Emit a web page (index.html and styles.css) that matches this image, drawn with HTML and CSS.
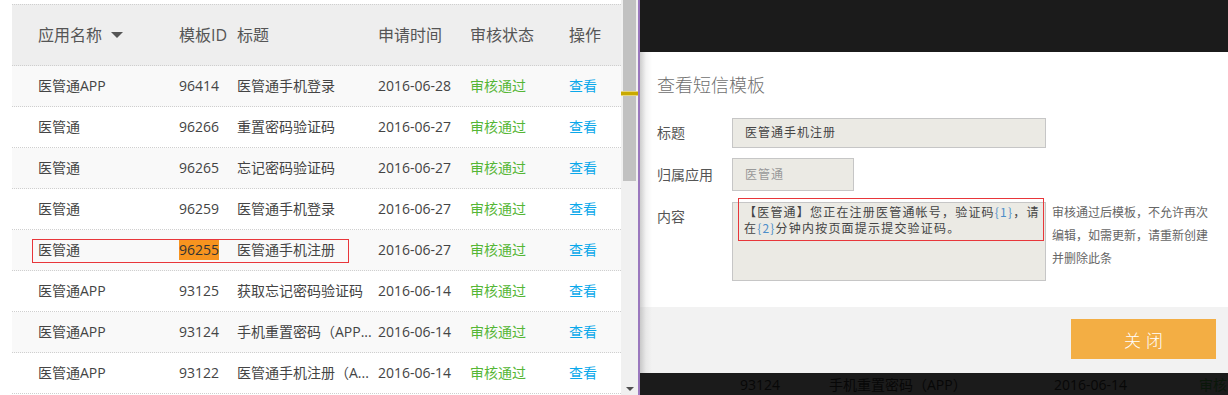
FILE: index.html
```html
<!DOCTYPE html>
<html lang="zh-CN">
<head>
<meta charset="utf-8">
<title>短信模板</title>
<link rel="stylesheet" href="styles.css">
</head>
<body>
<div class="page">
  <div class="left">
    <div class="table">
      <div class="thead">
        <div class="cell">应用名称<span class="caret"></span></div>
        <div class="cell">模板ID</div>
        <div class="cell">标题</div>
        <div class="cell">申请时间</div>
        <div class="cell">审核状态</div>
        <div class="cell">操作</div>
      </div>
      <div class="row odd">
        <div class="cell">医管通APP</div><div class="cell">96414</div><div class="cell">医管通手机登录</div><div class="cell">2016-06-28</div><div class="cell ok">审核通过</div><div class="cell"><a class="link">查看</a></div>
      </div>
      <div class="row">
        <div class="cell">医管通</div><div class="cell">96266</div><div class="cell">重置密码验证码</div><div class="cell">2016-06-27</div><div class="cell ok">审核通过</div><div class="cell"><a class="link">查看</a></div>
      </div>
      <div class="row odd">
        <div class="cell">医管通</div><div class="cell">96265</div><div class="cell">忘记密码验证码</div><div class="cell">2016-06-27</div><div class="cell ok">审核通过</div><div class="cell"><a class="link">查看</a></div>
      </div>
      <div class="row">
        <div class="cell">医管通</div><div class="cell">96259</div><div class="cell">医管通手机登录</div><div class="cell">2016-06-27</div><div class="cell ok">审核通过</div><div class="cell"><a class="link">查看</a></div>
      </div>
      <div class="row odd">
        <div class="cell">医管通</div><div class="cell"><span class="hl">96255</span></div><div class="cell">医管通手机注册</div><div class="cell">2016-06-27</div><div class="cell ok">审核通过</div><div class="cell"><a class="link">查看</a></div>
        <div class="redbox redbox-row"></div>
      </div>
      <div class="row">
        <div class="cell">医管通APP</div><div class="cell">93125</div><div class="cell">获取忘记密码验证码</div><div class="cell">2016-06-14</div><div class="cell ok">审核通过</div><div class="cell"><a class="link">查看</a></div>
      </div>
      <div class="row odd">
        <div class="cell">医管通APP</div><div class="cell">93124</div><div class="cell">手机重置密码（APP...</div><div class="cell">2016-06-14</div><div class="cell ok">审核通过</div><div class="cell"><a class="link">查看</a></div>
      </div>
      <div class="row">
        <div class="cell">医管通APP</div><div class="cell">93122</div><div class="cell">医管通手机注册（A...</div><div class="cell">2016-06-14</div><div class="cell ok">审核通过</div><div class="cell"><a class="link">查看</a></div>
      </div>
    </div>
    <div class="scrollbar">
      <div class="thumb"></div>
      <div class="mark"></div>
      <div class="arrow"></div>
    </div>
  </div>
  <div class="divider"></div>
  <div class="right">
    <div class="dark-top"></div>
    <div class="modal">
      <div class="modal-body">
        <h2 class="modal-title">查看短信模板</h2>
        <div class="form-row">
          <div class="label">标题</div>
          <div class="field field-wide">医管通手机注册</div>
        </div>
        <div class="form-row">
          <div class="label">归属应用</div>
          <div class="field field-short">医管通</div>
        </div>
        <div class="form-row form-row-top">
          <div class="label">内容</div>
          <div class="area-wrap">
            <div class="field field-area">
              <div class="area-line">【医管通】您正在注册医管通帐号，验证码<span class="var">{1}</span>，请</div>
              <div class="area-line">在<span class="var">{2}</span>分钟内按页面提示提交验证码。</div>
            </div>
            <div class="redbox redbox-area"></div>
          </div>
          <div class="hint">审核通过后模板，不允许再次编辑，如需更新，请重新创建并删除此条</div>
        </div>
      </div>
      <div class="modal-footer">
        <button class="btn-close">关闭</button>
      </div>
    </div>
    <div class="dark-bottom">
      <span class="db-id">93124</span>
      <span class="db-title">手机重置密码（APP）</span>
      <span class="db-date">2016-06-14</span>
      <span class="db-status">审核</span>
    </div>
  </div>
</div>
</body>
</html>
```

FILE: styles.css
```css
html, body {
  margin: 0;
  padding: 0;
}
body {
  width: 1228px;
  height: 395px;
  overflow: hidden;
  background: #fff;
  font-family: "Open Sans", "Noto Sans CJK SC", sans-serif;
}
.page {
  display: flex;
  height: 395px;
}

/* ---------- left table ---------- */
.left {
  display: flex;
  width: 638px;
  flex: none;
  padding-left: 12px;
  box-sizing: border-box;
  height: 395px;
  overflow: hidden;
}
.table {
  width: 609px;
  padding-top: 4px;
}
.thead,
.row {
  display: grid;
  grid-template-columns: 141px 58px 141px 92px 99px 1fr;
  padding-left: 26px;
  align-items: center;
}
.thead {
  height: 60px;
  background: #eeeeee;
  border-top: 1px dotted #cfcfcf;
  border-bottom: 1px dotted #cfcfcf;
  font-size: 16px;
  color: #555;
}
.row {
  position: relative;
  height: 40px;
  border-bottom: 1px dotted #cfcfcf;
  font-size: 14px;
  color: #444;
  background: #fff;
}
.row.odd {
  background: #f9f9f9;
}
.cell {
  white-space: nowrap;
  overflow: hidden;
  line-height: 20px;
}
.caret {
  display: inline-block;
  width: 0;
  height: 0;
  margin-left: 9px;
  border-left: 6px solid transparent;
  border-right: 6px solid transparent;
  border-top: 6px solid #555;
  vertical-align: 3px;
}
.ok {
  color: #55b635;
}
.link {
  color: #0aa8ea;
  text-decoration: none;
}
.hl {
  background: #f7941f;
  color: #333;
  padding: 1px 0;
}
.redbox {
  position: absolute;
  border: 1px solid #e8363a;
  box-sizing: border-box;
  pointer-events: none;
}
.redbox-row {
  left: 20px;
  top: 9px;
  width: 317px;
  height: 24px;
}

/* ---------- scrollbar ---------- */
.scrollbar {
  position: relative;
  width: 17px;
  flex: none;
  background: #f0f0f0;
  height: 395px;
}
.thumb {
  margin-left: 2px;
  width: 13px;
  height: 181px;
  background: #c1c1c1;
}
.mark {
  position: absolute;
  left: 0;
  top: 92px;
  width: 17px;
  height: 3px;
  background: #c9a900;
  box-shadow: 0 -1px 0 #e6d47a, 0 1px 0 #e6d47a;
}
.arrow {
  position: absolute;
  left: 5px;
  bottom: 4px;
  width: 0;
  height: 0;
  border-left: 4px solid transparent;
  border-right: 4px solid transparent;
  border-top: 4px solid #505050;
}
.divider {
  width: 2px;
  flex: none;
  background: #9a78bd;
}

/* ---------- right / modal ---------- */
.right {
  flex: 1;
  display: flex;
  flex-direction: column;
  background: #1b1b1b;
}
.dark-top {
  height: 52px;
  flex: none;
}
.modal {
  flex: none;
}
.modal-body {
  height: 255px;
  box-sizing: border-box;
  padding: 21px 0 0 17px;
  background: linear-gradient(to right, #cdcdcd 0, #f3f3f3 6px, #fff 12px);
}
.modal-title {
  margin: 0 0 21px;
  font-size: 18px;
  line-height: 24px;
  font-weight: 300;
  color: #6f6f6f;
}
.form-row {
  display: flex;
  align-items: center;
  margin-bottom: 10px;
}
.form-row-top {
  align-items: flex-start;
  margin-top: 11px;
}
.label {
  width: 75px;
  flex: none;
  font-size: 14px;
  line-height: 30px;
  color: #555;
}
.field {
  background: #ebeae4;
  border: 1px solid #c6c6c6;
  box-sizing: border-box;
  font-size: 12px;
  letter-spacing: 1px;
  color: #444;
}
.field-wide {
  width: 314px;
  height: 30px;
  line-height: 28px;
  padding-left: 12px;
}
.field-short {
  width: 122px;
  height: 33px;
  line-height: 31px;
  padding-left: 12px;
  color: #999;
}
.area-wrap {
  position: relative;
  flex: none;
}
.field-area {
  width: 314px;
  height: 79px;
  padding: 1px 4px 0 11px;
  letter-spacing: 1.2px;
  font-family: "Noto Sans CJK SC", sans-serif;
}
.area-line {
  height: 16px;
  line-height: 16px;
  white-space: nowrap;
}
.var {
  color: #4d8ec9;
}
.redbox-area {
  left: 6px;
  top: -4px;
  width: 306px;
  height: 43px;
}
.hint {
  width: 160px;
  margin-left: 6px;
  font-size: 12px;
  line-height: 23px;
  color: #666;
  margin-top: -1px;
}
.modal-footer {
  height: 66px;
  box-sizing: border-box;
  display: flex;
  justify-content: flex-end;
  align-items: flex-start;
  padding: 12px 12px 0 0;
  background: linear-gradient(to right, #c8c8c8 0, #e8e8e8 6px, #f2f2f2 12px);
}
.btn-close {
  width: 145px;
  height: 40px;
  border: 0;
  background: #f3ae44;
  color: #fff;
  font-family: "Noto Sans CJK SC", sans-serif;
  font-size: 17px;
  font-weight: 300;
  letter-spacing: 5px;
  padding: 0 0 0 5px;
}
.dark-bottom {
  flex: 1;
  display: flex;
  align-items: center;
  padding-left: 100px;
  font-size: 14px;
  color: #070707;
  white-space: nowrap;
  overflow: hidden;
}
.db-id { width: 89px; flex: none; }
.db-title { width: 225px; flex: none; }
.db-date { width: 145px; flex: none; }
.db-status { color: #0a170a; }
```
